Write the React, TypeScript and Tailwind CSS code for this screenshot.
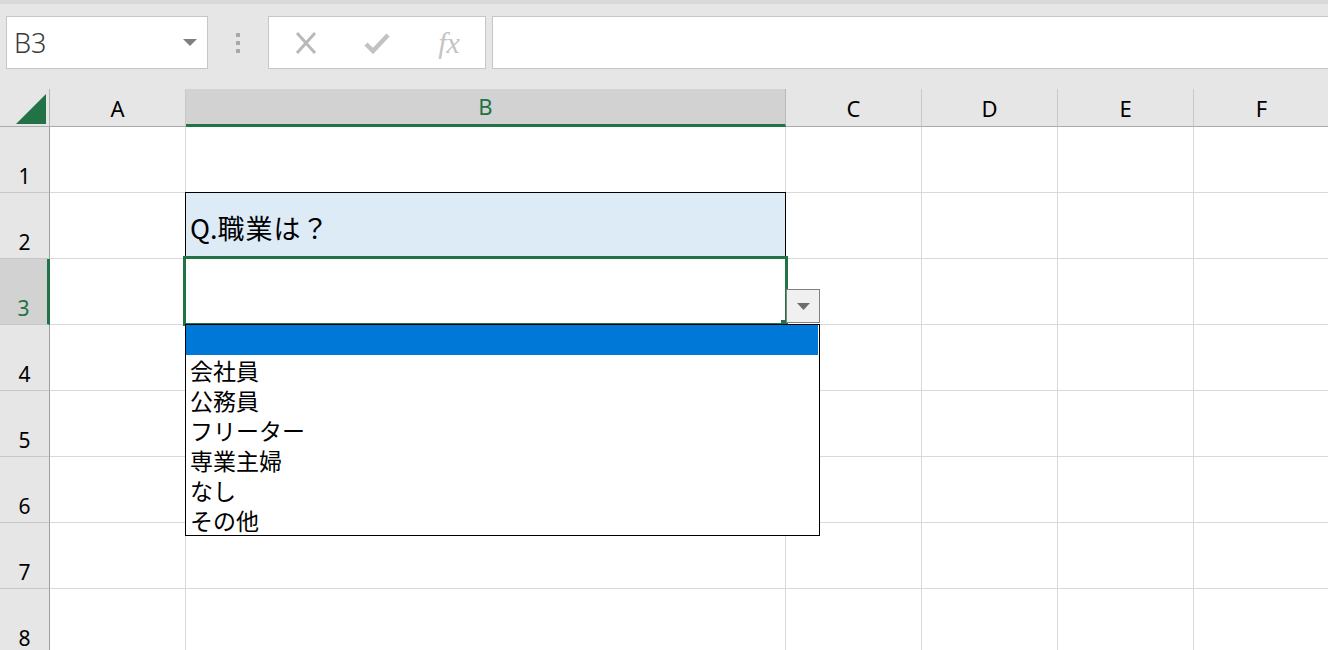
import React from "react";

const columns = [
  { key: "A", width: 136 },
  { key: "B", width: 600 },
  { key: "C", width: 136 },
  { key: "D", width: 136 },
  { key: "E", width: 136 },
  { key: "F", width: 136 },
];

const rows = [1, 2, 3, 4, 5, 6, 7, 8];

const options = ["会社員", "公務員", "フリーター", "専業主婦", "なし", "その他"];

const uiFont = { fontFamily: '"Noto Sans", "Open Sans", sans-serif' };
const cellFont = { fontFamily: '"Noto Sans CJK JP", "Noto Sans", sans-serif' };

function CancelIcon() {
  return (
    <svg width="24" height="22" viewBox="0 0 24 22">
      <path d="M3 1 L21 21 M21 1 L3 21" stroke="#b9b9b9" strokeWidth="3" fill="none" />
    </svg>
  );
}

function EnterIcon() {
  return (
    <svg width="26" height="22" viewBox="0 0 26 22">
      <path d="M2 12 L9 19 L24 3" stroke="#c2c2c2" strokeWidth="4.5" fill="none" strokeLinejoin="miter" />
    </svg>
  );
}

function Toolbar() {
  return (
    <div className="h-[89px] bg-[#e6e6e6] flex flex-col">
      <div className="h-[4px] bg-[#d8d8d8]" />
      <div className="flex items-start pt-[12px]">
        {/* Name box */}
        <div className="ml-[6px] shrink-0 w-[202px] h-[53px] bg-white border border-[#c6c6c6] flex items-center justify-between pl-[7px] pr-[10px]">
          <span className="text-[27px] text-[#3a3a3a] leading-none font-light" style={uiFont}>
            B3
          </span>
          <svg width="14" height="7" viewBox="0 0 14 7">
            <path d="M0 0 L14 0 L7 7 Z" fill="#7f7f7f" />
          </svg>
        </div>
        {/* Grip dots */}
        <div className="shrink-0 w-[60px] h-[53px] flex flex-col items-center justify-center gap-[4px]">
          <div className="w-[4px] h-[4px] bg-[#a8a8a8]" />
          <div className="w-[4px] h-[4px] bg-[#a8a8a8]" />
          <div className="w-[4px] h-[4px] bg-[#a8a8a8]" />
        </div>
        {/* Formula buttons */}
        <div className="shrink-0 w-[218px] h-[53px] bg-white border border-[#c6c6c6] flex items-center">
          <div className="w-[72px] flex justify-center pl-[2px]">
            <CancelIcon />
          </div>
          <div className="w-[72px] flex justify-center">
            <EnterIcon />
          </div>
          <div className="w-[72px] flex justify-center">
            <span
              className="text-[30px] italic text-[#c4c4c4] leading-none"
              style={{ fontFamily: '"Liberation Serif", "DejaVu Serif", serif' }}
            >
              fx
            </span>
          </div>
        </div>
        {/* Formula bar */}
        <div className="ml-[6px] w-[860px] shrink-0 h-[53px] bg-white border border-[#c6c6c6]" />
      </div>
    </div>
  );
}

function Sheet() {
  return (
    <div className="relative">
      <div className="grid grid-cols-[50px_136px_600px_136px_136px_136px_136px] grid-rows-[38px_repeat(8,66px)]">
        {/* Corner */}
        <div className="bg-[#e6e6e6] border-r border-b border-r-[#b4b4b4] border-b-[#ababab] relative">
          <svg className="absolute left-[16px] top-[5px]" width="30" height="30" viewBox="0 0 30 30">
            <path d="M0 30 L30 30 L30 0 Z" fill="#217346" />
          </svg>
        </div>
        {columns.map((c) =>
          c.key === "B" ? (
            <div
              key={c.key}
              className="bg-[#d2d2d2] border-r border-r-[#b8b8b8] border-b-[3px] border-b-[#217346] flex justify-center pt-[6px]"
            >
              <span className="text-[22px] leading-[22px] text-[#217346]" style={uiFont}>
                {c.key}
              </span>
            </div>
          ) : (
            <div
              key={c.key}
              className="bg-[#e6e6e6] border-r border-r-[#c8c8c8] border-b border-b-[#ababab] flex justify-center pt-[8px]"
            >
              <span className="text-[22px] leading-[22px] text-black" style={uiFont}>
                {c.key}
              </span>
            </div>
          )
        )}

        {rows.map((r) => (
          <React.Fragment key={r}>
            {r === 3 ? (
              <div className="bg-[#d2d2d2] border-r-[3px] border-r-[#217346] border-b border-b-[#c6c6c6] flex justify-center pt-[39px]">
                <span className="text-[21px] leading-[21px] text-[#217346]" style={uiFont}>
                  {r}
                </span>
              </div>
            ) : (
              <div className="bg-[#e6e6e6] border-r border-r-[#9e9e9e] border-b border-b-[#c6c6c6] flex justify-center pt-[39px]">
                <span className="text-[21px] leading-[21px] text-black" style={uiFont}>
                  {r}
                </span>
              </div>
            )}
            {columns.map((c) =>
              r === 2 && c.key === "B" ? (
                <div
                  key={c.key}
                  className="bg-[#ddebf7] border-r border-b border-[#d9d9d9] flex items-end pl-[4px] pb-[14px]"
                >
                  <span className="text-[27px] leading-[32px] text-black" style={cellFont}>
                    Q.<span className="tracking-[1px]">職業は？</span>
                  </span>
                </div>
              ) : (
                <div key={c.key} className="bg-white border-r border-b border-[#d9d9d9]" />
              )
            )}
          </React.Fragment>
        ))}
      </div>

      {/* B2 outline */}
      <div className="absolute left-[185px] top-[103px] w-[601px] h-[67px] border border-black pointer-events-none" />

      {/* B3 selection */}
      <div className="absolute left-[183px] top-[167px] w-[605px] h-[70px] border-[3px] border-[#217346] pointer-events-none" />
      <div className="absolute left-[781px] top-[231px] w-[7px] h-[6px] bg-[#217346]" />

      {/* In-cell dropdown button */}
      <div className="absolute left-[786px] top-[200px] w-[34px] h-[34px] bg-[#f0f0f0] border border-[#808080] flex items-center justify-center">
        <svg width="13" height="7" viewBox="0 0 13 7">
          <path d="M0 0 L13 0 L6.5 7 Z" fill="#6d6d6d" />
        </svg>
      </div>

      {/* Validation list */}
      <div className="absolute left-[185px] top-[235px] w-[635px] h-[212px] bg-white border border-black">
        <div className="h-[30px] bg-[#0078d7] mr-[1px]" />
        {options.map((o) => (
          <div key={o} className="h-[30px] leading-[30px] pl-[4px] text-[23px] text-black" style={cellFont}>
            {o}
          </div>
        ))}
      </div>
    </div>
  );
}

export default function App() {
  return (
    <div className="w-[1328px] h-[650px] overflow-hidden bg-white">
      <Toolbar />
      <Sheet />
    </div>
  );
}
